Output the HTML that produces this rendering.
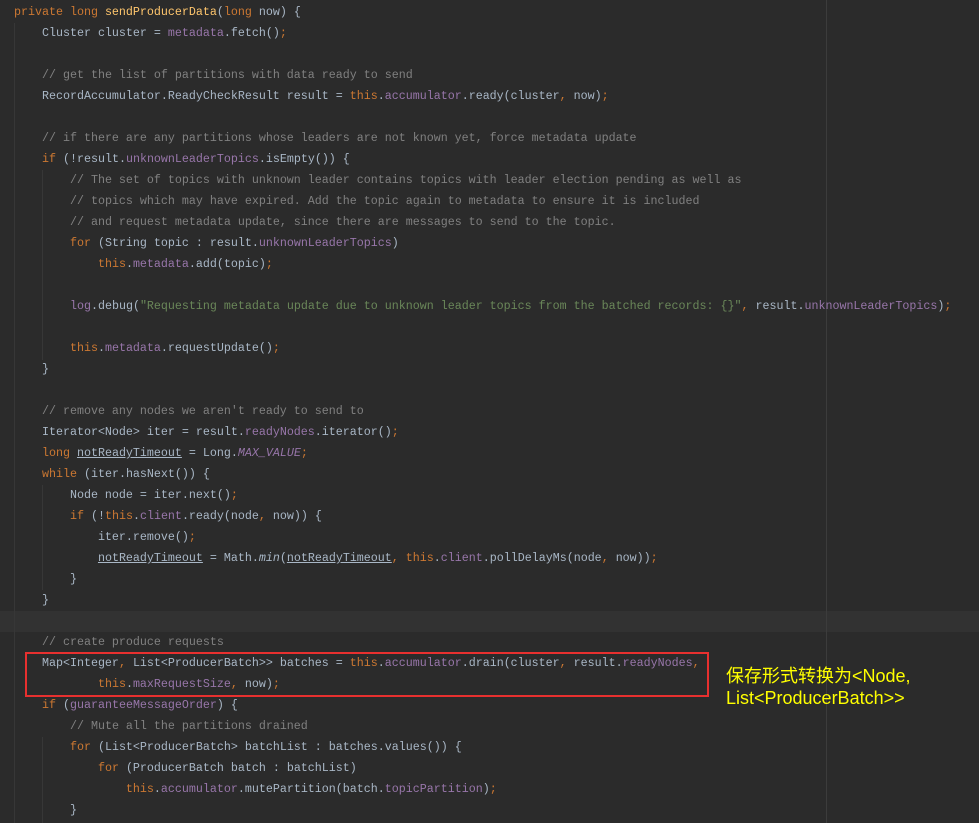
<!DOCTYPE html>
<html><head><meta charset="utf-8"><style>
html,body{margin:0;padding:0;background:#2b2b2b;width:979px;height:823px;overflow:hidden;position:relative}
pre{margin:0;position:absolute;left:14px;top:2px;font-family:"Liberation Mono",monospace;font-size:11.67px;line-height:21px;color:#a9b7c6}
.k{color:#cc7832}.c{color:#808080}.f{color:#9876aa}.s{color:#6a8759}.m{color:#ffc66d}.i{font-style:italic}.u{text-decoration:underline}
.hl{position:absolute;left:0;top:611px;width:979px;height:21px;background:#323232}
.margin{position:absolute;left:826px;top:0;width:1px;height:823px;background:#3c3c3c}
.g{position:absolute;width:1px;background:#373737}
.box{position:absolute;left:25px;top:652px;width:680px;height:41px;border:2px solid #e8302f}
.note{position:absolute;left:726px;top:665px;color:#ffff00;font-family:"Liberation Sans","Noto Sans CJK SC",sans-serif;font-size:18px;line-height:22px}
</style></head><body>
<div class="hl"></div>
<div class="margin"></div>
<div class="g" style="left:14px;top:23px;height:800px"></div>
<div class="g" style="left:42px;top:170px;height:190px"></div>
<div class="g" style="left:42px;top:485px;height:105px"></div>
<div class="g" style="left:42px;top:737px;height:86px"></div>
<pre><span class="k">private long </span><span class="m">sendProducerData</span>(<span class="k">long </span>now) {
    Cluster cluster = <span class="f">metadata</span>.fetch()<span class="k">;</span>

    <span class="c">// get the list of partitions with data ready to send</span>
    RecordAccumulator.ReadyCheckResult result = <span class="k">this</span>.<span class="f">accumulator</span>.ready(cluster<span class="k">, </span>now)<span class="k">;</span>

    <span class="c">// if there are any partitions whose leaders are not known yet, force metadata update</span>
    <span class="k">if </span>(!result.<span class="f">unknownLeaderTopics</span>.isEmpty()) {
        <span class="c">// The set of topics with unknown leader contains topics with leader election pending as well as</span>
        <span class="c">// topics which may have expired. Add the topic again to metadata to ensure it is included</span>
        <span class="c">// and request metadata update, since there are messages to send to the topic.</span>
        <span class="k">for </span>(String topic : result.<span class="f">unknownLeaderTopics</span>)
            <span class="k">this</span>.<span class="f">metadata</span>.add(topic)<span class="k">;</span>

        <span class="f">log</span>.debug(<span class="s">"Requesting metadata update due to unknown leader topics from the batched records: {}"</span><span class="k">, </span>result.<span class="f">unknownLeaderTopics</span>)<span class="k">;</span>

        <span class="k">this</span>.<span class="f">metadata</span>.requestUpdate()<span class="k">;</span>
    }

    <span class="c">// remove any nodes we aren't ready to send to</span>
    Iterator&lt;Node&gt; iter = result.<span class="f">readyNodes</span>.iterator()<span class="k">;</span>
    <span class="k">long </span><span class="u">notReadyTimeout</span> = Long.<span class="f i">MAX_VALUE</span><span class="k">;</span>
    <span class="k">while </span>(iter.hasNext()) {
        Node node = iter.next()<span class="k">;</span>
        <span class="k">if </span>(!<span class="k">this</span>.<span class="f">client</span>.ready(node<span class="k">, </span>now)) {
            iter.remove()<span class="k">;</span>
            <span class="u">notReadyTimeout</span> = Math.<span class="i">min</span>(<span class="u">notReadyTimeout</span><span class="k">, this</span>.<span class="f">client</span>.pollDelayMs(node<span class="k">, </span>now))<span class="k">;</span>
        }
    }

    <span class="c">// create produce requests</span>
    Map&lt;Integer<span class="k">, </span>List&lt;ProducerBatch&gt;&gt; batches = <span class="k">this</span>.<span class="f">accumulator</span>.drain(cluster<span class="k">, </span>result.<span class="f">readyNodes</span><span class="k">,</span>
            <span class="k">this</span>.<span class="f">maxRequestSize</span><span class="k">, </span>now)<span class="k">;</span>
    <span class="k">if </span>(<span class="f">guaranteeMessageOrder</span>) {
        <span class="c">// Mute all the partitions drained</span>
        <span class="k">for </span>(List&lt;ProducerBatch&gt; batchList : batches.values()) {
            <span class="k">for </span>(ProducerBatch batch : batchList)
                <span class="k">this</span>.<span class="f">accumulator</span>.mutePartition(batch.<span class="f">topicPartition</span>)<span class="k">;</span>
        }</pre>
<div class="box"></div>
<div class="note">保存形式转换为&lt;Node,<br>List&lt;ProducerBatch&gt;&gt;</div>
</body></html>
